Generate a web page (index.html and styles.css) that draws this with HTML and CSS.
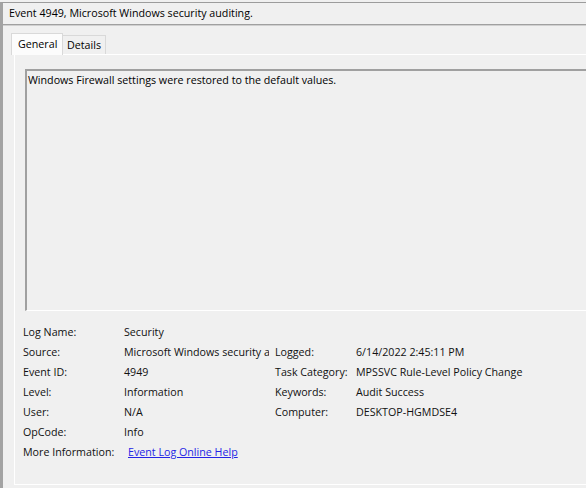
FILE: index.html
```html
<!DOCTYPE html>
<html>
<head>
<meta charset="utf-8">
<link rel="stylesheet" href="styles.css">
</head>
<body>
<div class="window">
  <div class="header">Event 4949, Microsoft Windows security auditing.</div>
  <div class="content">
    <div class="tabs">
      <div class="tab active">General</div>
      <div class="tab">Details</div>
    </div>
    <div class="panel">
      <div class="desc">Windows Firewall settings were restored to the default values.</div>
      <div class="props">
        <div class="lbl">Log Name:</div><div class="val">Security</div><div></div><div></div>
        <div class="lbl">Source:</div><div class="val clip">Microsoft Windows security auditing.</div><div class="lbl">Logged:</div><div class="val">6/14/2022 2:45:11 PM</div>
        <div class="lbl">Event ID:</div><div class="val">4949</div><div class="lbl">Task Category:</div><div class="val">MPSSVC Rule-Level Policy Change</div>
        <div class="lbl">Level:</div><div class="val">Information</div><div class="lbl">Keywords:</div><div class="val">Audit Success</div>
        <div class="lbl">User:</div><div class="val">N/A</div><div class="lbl">Computer:</div><div class="val">DESKTOP-HGMDSE4</div>
        <div class="lbl">OpCode:</div><div class="val">Info</div><div></div><div></div>
        <div class="lbl">More Information:</div><div class="val link-cell"><a class="link" href="#">Event Log Online Help</a></div><div></div><div></div>
      </div>
    </div>
  </div>
</div>
</body>
</html>
```

FILE: styles.css
```css
html, body {
  margin: 0;
  padding: 0;
  background: #f0f0f0;
  overflow: hidden;
  height: 488px;
}
body {
  font-family: "Open Sans", "Noto Sans", sans-serif;
  font-size: 10.7px;
  color: #111;
}
.window {
  width: 660px;
  margin-top: 2px;
  border-top: 1px solid #9c9c9c;
  border-left: 3px solid #a3a3a3;
  height: 486px;
  box-sizing: border-box;
}
.header {
  height: 21px;
  line-height: 21px;
  padding-left: 6px;
  border-bottom: 1px solid #a0a0a0;
  box-shadow: 0 1px 0 #d0d0d0;
  color: #000;
}
.content {
  padding: 8px 0 0 8px;
}
.tabs {
  display: flex;
  align-items: flex-end;
  height: 21px;
}
.tab {
  box-sizing: border-box;
  border: 1px solid #d9d9d9;
  border-bottom: none;
  color: #000;
}
.tab.active {
  position: relative;
  z-index: 1;
  width: 52px;
  height: 22px;
  margin-bottom: -1px;
  background: #fcfcfc;
  padding: 3px 0 0 6px;
}
.tab:not(.active) {
  width: 43px;
  height: 19px;
  border-left: none;
  background: #f0f0f0;
  padding: 2px 0 0 4px;
}
.panel {
  margin-left: 3px;
  height: 431px;
  box-sizing: border-box;
  border: 1px solid #fff;
  border-right: none;
  background: #f0f0f0;
  padding: 14px 0 0 8px;
}
.desc {
  margin-left: 2px;
  height: 242px;
  box-sizing: border-box;
  border-top: 2px solid #a0a0a0;
  border-left: 2px solid #a0a0a0;
  border-bottom: 1px solid #fff;
  padding: 2px 0 0 1px;
  line-height: 15px;
  color: #000;
}
.props {
  margin-top: 11px;
  display: grid;
  grid-template-columns: 101px 151px 81px auto;
  grid-auto-rows: 20px;
  line-height: 20px;
}
.lbl, .val {
  white-space: nowrap;
}
.clip {
  width: 145px;
  overflow: hidden;
}
.link-cell {
  padding-left: 4px;
}
.link {
  color: #2424e6;
  text-decoration: underline;
}
```
